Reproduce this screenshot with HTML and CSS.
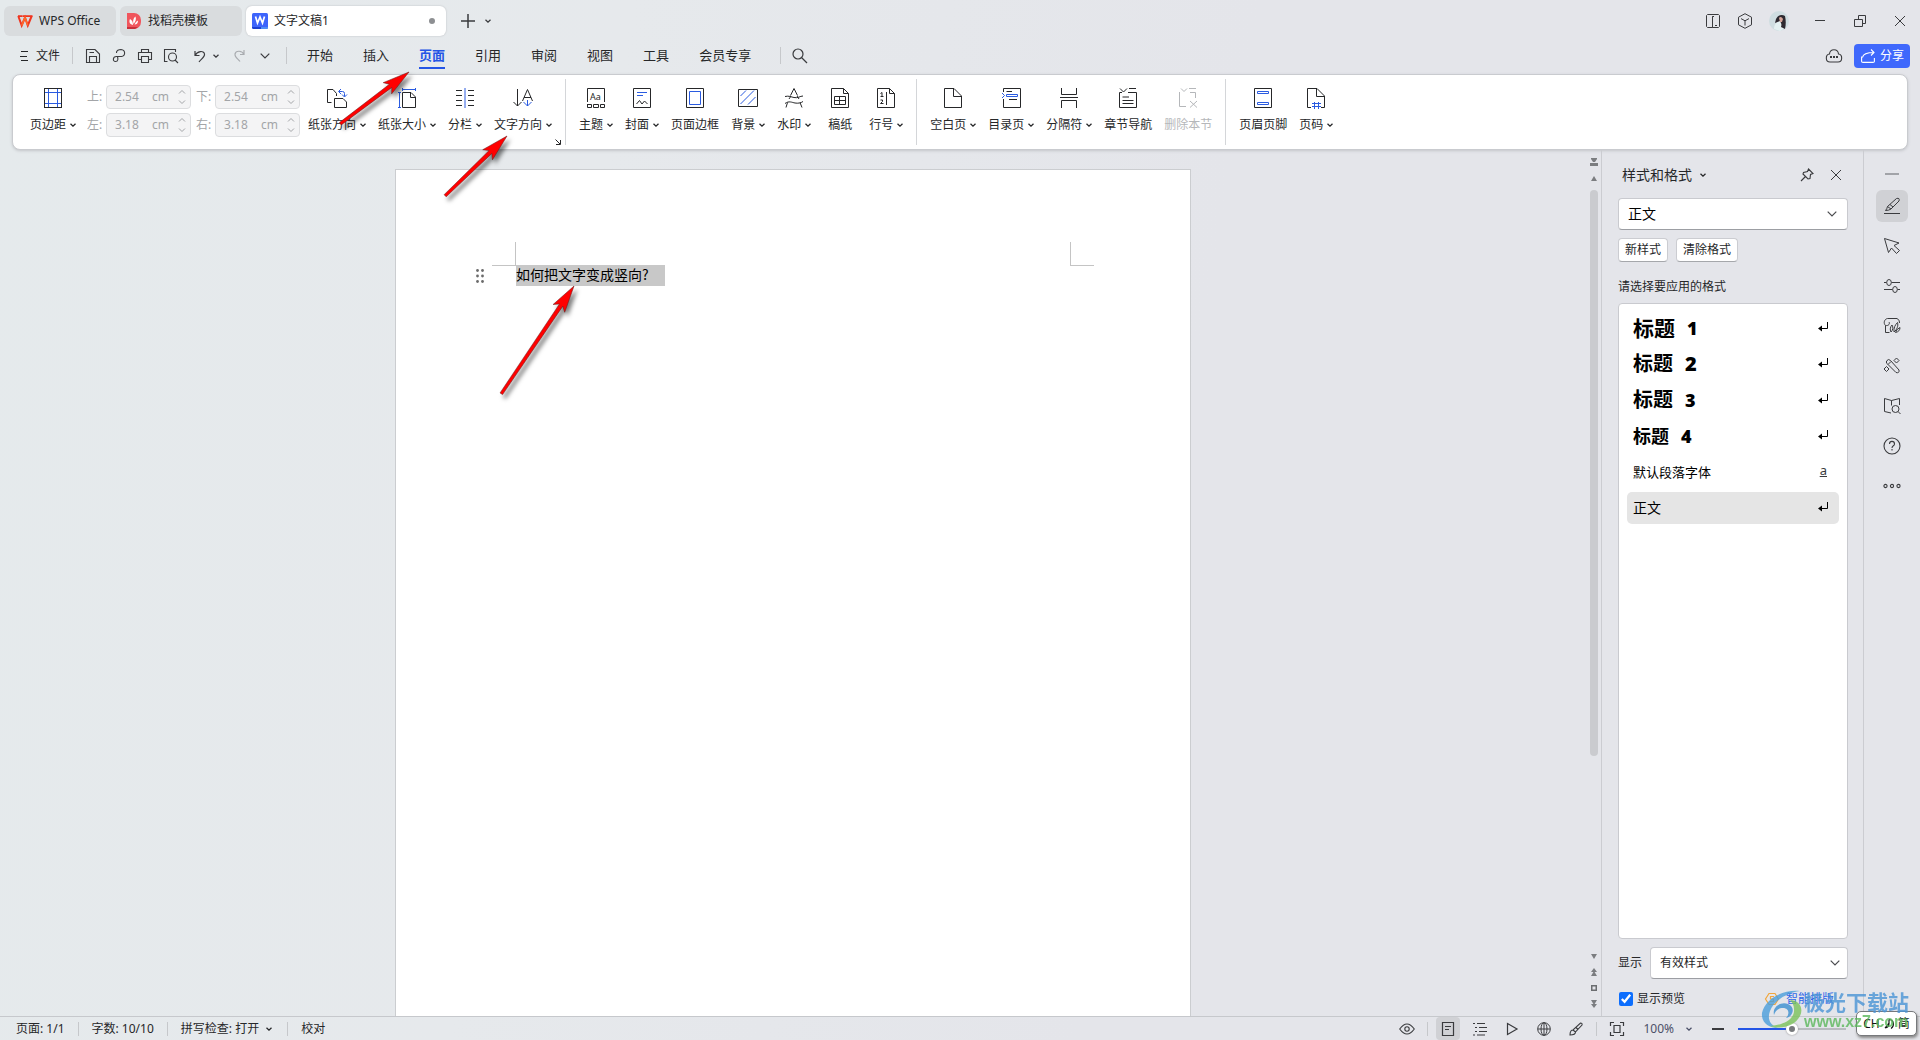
FILE: index.html
```html
<!DOCTYPE html>
<html lang="zh-CN">
<head>
<meta charset="utf-8">
<title>文字文稿1 - WPS Office</title>
<link rel="stylesheet" href="styles.css">
</head>
<body>
<svg class="defs" aria-hidden="true">
  <symbol id="chev" viewBox="0 0 6 4"><path d="M.5 .7 3 3.1 5.5 .7" fill="none" stroke="currentColor" stroke-width="1.3"/></symbol>
  <symbol id="chev-l" viewBox="0 0 10 6"><path d="M.7 .7 5 5 9.300 .7" fill="none" stroke="currentColor" stroke-width="1.2"/></symbol>
  <symbol id="spin" viewBox="0 0 8 16"><path d="M1 4.500 4 1.500 7 4.500M1 11.500 4 14.500 7 11.500" fill="none" stroke="currentColor"/></symbol>
  <symbol id="enter" viewBox="0 0 12 12"><path d="M10.500 0V6.500H2" fill="none" stroke="currentColor"/><path d="M1 6.500 5 3.500V9.500Z" fill="currentColor"/></symbol>
  <symbol id="close" viewBox="0 0 12 12"><path d="M1 1 11 11M11 1 1 11" fill="none" stroke="currentColor"/></symbol>
</svg>

<header class="titlebar">
  <nav class="doctabs" aria-label="文档标签">
    <button class="doctab home"><svg class="logo-wps" viewBox="0 0 16 12"><path d="M1 1.200H5.200M5.500 1.200H15.500" stroke="#f0341f" stroke-width="1.800"/><path d="M1.300 1 4.700 10.500 8 2.500 10.800 10.500 14.700 1" fill="none" stroke="#f0341f" stroke-width="2"/><path d="M4.700 10.500 8 2.500 10.800 10.500" fill="none" stroke="#ff6a2b" stroke-width="1.600"/></svg><span>WPS Office</span></button>
    <button class="doctab tpl"><svg class="i16" viewBox="0 0 16 16"><path d="M1 0H8A7 7 0 0 1 15 7V9A7 7 0 0 1 8 16H1Z" fill="#f0555c"/><path d="M1 14H12L9 16H1Z" fill="#c9303b"/><path d="M7 12C3 11 3 8 4 6 6 7 7 9 7 12ZM7.500 11C6.500 7 8 4.500 9.500 3.500 10.500 6 9.500 9 7.500 11ZM8.500 11.500C9.500 9 11 8 12 7.500 12 10 11 11.500 8.500 11.500Z" fill="#fff"/></svg><span>找稻壳模板</span></button>
    <button class="doctab active"><svg class="i16" viewBox="0 0 16 16"><rect width="16" height="16" rx="1.500" fill="#3d64fb"/><path d="M0 14H9V16H1.500L0 15Z" fill="#1b3fd0"/><path d="M9 14H16V15L15 16H9Z" fill="#4f8df5"/><path d="M3.500 3.500 5.500 10 8 4 10.500 10 12.500 3.500" fill="none" stroke="#fff" stroke-width="1.700"/></svg><span>文字文稿1</span><i class="dot"></i></button>
    <button class="icon newtab" aria-label="新建"><svg class="i14" viewBox="0 0 14 14"><path d="M7 0V14M0 7H14" stroke="currentColor" stroke-width="1.500"/></svg></button>
    <button class="icon" aria-label="标签列表"><svg class="chev" viewBox="0 0 6 4"><use href="#chev"/></svg></button>
  </nav>
  <div class="winctl">
    <button class="icon" aria-label="侧栏"><svg class="i16" viewBox="0 0 16 16"><path d="M7.500 14.500H2.500L1.500 13.500V2.500L2.500 1.500H13.500L14.500 2.500V13.500L13.500 14.500H7.500V3.500H9M7.500 3.500V14.500M10 12.500H12" fill="none" stroke="currentColor"/></svg></button>
    <button class="icon" aria-label="应用"><svg class="i16" viewBox="0 0 16 16"><path d="M8 .7 14.500 4.200V11.800L8 15.300 1.500 11.800V4.200ZM4 5.600 8 7.800 12 5.600M8 7.800V12.500" fill="none" stroke="currentColor"/></svg></button>
    <button class="icon" aria-label="账户"><svg class="i20" viewBox="0 0 20 20"><circle cx="10" cy="10" r="10" fill="#cfdde1"/><path d="M5 18C5 13 9 10 12 10L16 17 11 20Z" fill="#e4f1f2"/><path d="M7 8C9 4 13 3 16 5 17 9 17 14 16 18L12 16C13 13 12 12 11 10L6 12Z" fill="#2e2930"/><path d="M10 7C11 5 13 6 14 8L13 11 11 11Z" fill="#d5a69b"/></svg></button>
    <button class="icon win min" aria-label="最小化"><svg class="i12" viewBox="0 0 12 12"><path d="M1 5.500H11" stroke="currentColor"/></svg></button>
    <button class="icon win" aria-label="还原"><svg class="i12" viewBox="0 0 12 12"><path d="M.5 4.500H8.500V11.500H.5ZM4.500 4.500V.5H11.500V8.500H8.500" fill="none" stroke="currentColor"/></svg></button>
    <button class="icon win" aria-label="关闭"><svg class="i12" viewBox="0 0 12 12"><use href="#close"/></svg></button>
  </div>
</header>

<div class="menubar">
  <button class="file"><svg class="i10" viewBox="0 0 10 10"><path d="M2 .5H9M1 5.500H8M2 9.500H9" stroke="currentColor"/></svg><span>文件</span></button>
  <i class="vsep"></i>
  <div class="quick">
    <button class="icon" aria-label="保存"><svg class="i16" viewBox="0 0 16 16"><path d="M1.500 1.500H10L14.500 6V14.500H1.500ZM4.500 14V8.500H11.500V14M4.500 4.500H9" fill="none" stroke="currentColor" stroke-width="1.100"/></svg></button>
    <button class="icon" aria-label="输出为PDF"><svg class="i16" viewBox="0 0 16 16"><path d="M5.500 5C5 2.500 8 1.500 10 1.500 15 2 14.500 8 10.500 8.500H5.500C1.500 8.500 1.500 13.500 4.500 13.500 7.500 13.500 7 10.500 6.500 8.500" fill="none" stroke="currentColor" stroke-width="1.100"/></svg></button>
    <button class="icon" aria-label="打印"><svg class="i16" viewBox="0 0 16 16"><path d="M4.500 4.500V1.500H11.500V4.500M4.500 11.500H1.500V4.500H14.500V11.500H11.500M4.500 8.500H11.500V14.500H4.500Z" fill="none" stroke="currentColor" stroke-width="1.100"/></svg></button>
    <button class="icon" aria-label="打印预览"><svg class="i16" viewBox="0 0 16 16"><path d="M4.500 13.500H1.500V1.500H12.500V4M12 12 15 15" fill="none" stroke="currentColor" stroke-width="1.100"/><circle cx="9.500" cy="9" r="4" fill="none" stroke="currentColor" stroke-width="1.100"/></svg></button>
    <button class="icon undo" aria-label="撤销"><svg class="i14" viewBox="0 0 14 14"><path d="M2 2V6.500H6.500M2 6.500C4 2 11 1 11.500 5 12 8 8 10 6 13" fill="none" stroke="currentColor" stroke-width="1.200"/></svg><svg class="chev" viewBox="0 0 6 4"><use href="#chev"/></svg></button>
    <button class="icon muted" aria-label="恢复"><svg class="i14" viewBox="0 0 14 14"><path d="M11 1V5.500H7M11 5.500C9 1.500 3 1 2 5 1.500 8 5 10 7 12.500" fill="none" stroke="currentColor" stroke-width="1.200"/></svg></button>
    <button class="icon" aria-label="自定义快速访问"><svg class="chev-l" viewBox="0 0 10 6"><use href="#chev-l"/></svg></button>
  </div>
  <i class="vsep"></i>
  <nav class="menus">
    <button>开始</button><button>插入</button><button class="current">页面</button><button>引用</button><button>审阅</button><button>视图</button><button>工具</button><button>会员专享</button>
  </nav>
  <i class="vsep"></i>
  <button class="icon search" aria-label="搜索"><svg class="i16" viewBox="0 0 16 16"><circle cx="6" cy="6" r="5" fill="none" stroke="currentColor" stroke-width="1.200"/><path d="M9.500 9.500 15 15" stroke="currentColor" stroke-width="1.200"/></svg></button>
  <div class="menuright">
    <button class="icon" aria-label="云同步"><svg class="i16" viewBox="0 0 16 16"><path d="M4 14C-.8 14-.8 6.500 3.500 6 4 .3 12 .3 12.500 6 16.800 6.500 16.800 14 12 14Z" fill="none" stroke="currentColor" stroke-width="1.100"/><path d="M4 8H6V10H4ZM7 8H9V10H7ZM10 8H12V10H10Z" fill="currentColor"/></svg></button>
    <button class="share"><svg class="i14" viewBox="0 0 14 14"><path d="M.6 7.500V12.500Q.6 13.400 2 13.400H12Q13.400 13.400 13.400 12.500V9M1.500 8.500C2 5 6 3.500 13 3.500M10 .5 13 3.500 10 6.500" fill="none" stroke="currentColor" stroke-width="1.100"/></svg><span>分享</span></button>
  </div>
</div>

<section class="ribbon" aria-label="页面">
  <button class="tool"><svg class="i20" viewBox="0 0 20 20"><rect x="1.500" y=".5" width="17" height="19" fill="none" stroke="currentColor"/><path d="M5.500 1V19M14.500 1V19M2 4.500H18M2 15.500H18" fill="none" stroke="#2a5be0"/></svg><span class="cap">页边距<svg class="chev" viewBox="0 0 6 4"><use href="#chev"/></svg></span></button>
  <div class="margins">
    <label for="m1">上:</label><div class="num"><input id="m1" value="2.54" disabled><span>cm</span><svg class="spin" viewBox="0 0 8 16"><use href="#spin"/></svg></div>
    <label for="m2">下:</label><div class="num"><input id="m2" value="2.54" disabled><span>cm</span><svg class="spin" viewBox="0 0 8 16"><use href="#spin"/></svg></div>
    <label for="m3">左:</label><div class="num"><input id="m3" value="3.18" disabled><span>cm</span><svg class="spin" viewBox="0 0 8 16"><use href="#spin"/></svg></div>
    <label for="m4">右:</label><div class="num"><input id="m4" value="3.18" disabled><span>cm</span><svg class="spin" viewBox="0 0 8 16"><use href="#spin"/></svg></div>
  </div>
  <button class="tool"><svg class="i20" viewBox="0 0 20 20"><path d="M4.500 14.500H.5V1.500H6L9.500 5.500V8M7.500 10.500H16L19.500 14V19.500H7.500Z" fill="none" stroke="currentColor"/><path d="M12 3.500H15.500Q17.500 3.500 17.500 5.500V8.500M14 1 11.500 3.500 14 6M15 6.500 17.500 9 20 6.500" fill="none" stroke="#2a5be0"/></svg><span class="cap">纸张方向<svg class="chev" viewBox="0 0 6 4"><use href="#chev"/></svg></span></button>
  <button class="tool"><svg class="i20" viewBox="0 0 20 20"><path d="M5.500 4.500H14L18.500 9V19.500H5.500ZM13.500 4.500V9.500H18.500" fill="none" stroke="currentColor"/><path d="M5 1.500H18M5.500 0V3M18.500 0V3M2.500 5V19M1 4.500H4M1 19.500H4" fill="none" stroke="#2a5be0"/></svg><span class="cap">纸张大小<svg class="chev" viewBox="0 0 6 4"><use href="#chev"/></svg></span></button>
  <button class="tool"><svg class="i20" viewBox="0 0 20 20"><path d="M1 2.500H7M1 7.500H7M1 12.500H7M1 17.500H7M13 2.500H19M13 7.500H19M13 12.500H19M13 17.500H19" stroke="currentColor"/><path d="M10 0V20" stroke="#2a5be0"/></svg><span class="cap">分栏<svg class="chev" viewBox="0 0 6 4"><use href="#chev"/></svg></span></button>
  <button class="tool"><svg class="i20" viewBox="0 0 20 20"><path d="M4.500 1V18M.5 14 4.500 18 8.500 14M9.500 13 14.500 1.500 19.500 13M11 9.500H18" fill="none" stroke="currentColor"/><path d="M14.500 12V18M10.500 14 14.500 18 18.500 14" fill="none" stroke="#2a5be0"/></svg><span class="cap">文字方向<svg class="chev" viewBox="0 0 6 4"><use href="#chev"/></svg></span></button>
  <div class="rsep launch"><svg class="launcher" viewBox="0 0 6 6"><path d="M.5 .5 5 5M5.500 1V5.500H1" fill="none" stroke="currentColor"/></svg></div>
  <button class="tool"><svg class="i20" viewBox="0 0 20 20"><path d="M1.500 14V.5H18.500V14M1 16.500H5.500V19.500H1.500V16.500M7.500 16.500H12.500V19.500H7.500ZM14.500 16.500H18.500V19.500H14.500Z" fill="none" stroke="currentColor"/><text x="4" y="12" class="glyph">Aa</text></svg><span class="cap">主题<svg class="chev" viewBox="0 0 6 4"><use href="#chev"/></svg></span></button>
  <button class="tool"><svg class="i20" viewBox="0 0 20 20"><path d="M1.500 .5H18.500V19.500H1.500ZM4.500 16 7.500 12.500 10 16 12.500 13 15.500 16" fill="none" stroke="currentColor"/><path d="M5 4.500H15M5 7.500H11" stroke="#2a5be0"/></svg><span class="cap">封面<svg class="chev" viewBox="0 0 6 4"><use href="#chev"/></svg></span></button>
  <button class="tool"><svg class="i20" viewBox="0 0 20 20"><path d="M1.500 .5H18.500V19.500H1.500Z" fill="none" stroke="currentColor"/><path d="M4.500 3.500H15.500V16.500H4.500Z" fill="none" stroke="#2a5be0"/></svg><span class="cap">页面边框</span></button>
  <button class="tool"><svg class="i20" viewBox="0 0 20 20"><path d="M.5 1.500H19.500V18.500H.5Z" fill="none" stroke="currentColor"/><path d="M2.500 8 8 2.500M2.500 16 16 2.500M10 16.500 17.500 9" fill="none" stroke="#2a5be0"/></svg><span class="cap">背景<svg class="chev" viewBox="0 0 6 4"><use href="#chev"/></svg></span></button>
  <button class="tool"><svg class="i20" viewBox="0 0 20 20"><path d="M6.500 7.500 10 .5 13.500 7.500M5 11 7 8M15 11 13 8M3.500 14.500 2 19.500M16 14.500 18 19.500M1 8.500C5 7.500 7 9 10 9.500 14 10.500 16 8 19 8M1 15.500C5 12.500 8 14.500 11 15 14 15.500 17 15 19 13.500" fill="none" stroke="currentColor"/></svg><span class="cap">水印<svg class="chev" viewBox="0 0 6 4"><use href="#chev"/></svg></span></button>
  <button class="tool"><svg class="i20" viewBox="0 0 20 20"><path d="M1.500 .5H13.500L18.500 5.500V19.500H1.500ZM13.500 .5V5.500H18.500M4.500 8.500H15.500V16.500H4.500ZM4.500 12.500H15.500M9.500 8.500V16.500" fill="none" stroke="currentColor"/></svg><span class="cap">稿纸</span></button>
  <button class="tool"><svg class="i20" viewBox="0 0 20 20"><path d="M9 .5H1.500V19.500H18.500V5.500L13.500 .5H9M13.500 .5V5.500H18.500M10.500 4V17M4.500 5.500 6 4.500V8.500M4.500 8.500H7.500M4.500 12H6.500V13.500L4.500 15.500H7.500" fill="none" stroke="currentColor"/></svg><span class="cap">行号<svg class="chev" viewBox="0 0 6 4"><use href="#chev"/></svg></span></button>
  <div class="rsep"></div>
  <button class="tool"><svg class="i20" viewBox="0 0 20 20"><path d="M1.500 .5H11L18.500 8V19.500H1.500ZM10.500 .5V8.500H18.500" fill="none" stroke="currentColor"/></svg><span class="cap">空白页<svg class="chev" viewBox="0 0 6 4"><use href="#chev"/></svg></span></button>
  <button class="tool"><svg class="i20" viewBox="0 0 20 20"><path d="M2.500 4V.5H19.500V19.500H2.500V11M5.500 3.500H11M8 11.500H16" fill="none" stroke="currentColor"/><path d="M5.500 6.500H16.500V8.500H5.500ZM1 5 3.500 7.500 1 10" fill="none" stroke="#2a5be0"/></svg><span class="cap">目录页<svg class="chev" viewBox="0 0 6 4"><use href="#chev"/></svg></span></button>
  <button class="tool"><svg class="i20" viewBox="0 0 20 20"><path d="M2.500 0V6.500H17.500V0M1 9.500H19M2.500 20V12.500H17.500V20" fill="none" stroke="currentColor"/></svg><span class="cap">分隔符<svg class="chev" viewBox="0 0 6 4"><use href="#chev"/></svg></span></button>
  <button class="tool"><svg class="i20" viewBox="0 0 20 20"><path d="M10 4.500H18.500V19.500H1.500V4.500H4M2 .5 5.500 4 9 .5M11 .5H18M4.500 9H11M4.500 12.500H15.500M4.500 15.500H15.500" fill="none" stroke="currentColor"/></svg><span class="cap">章节导航</span></button>
  <button class="tool" disabled><svg class="i20" viewBox="0 0 20 20"><path d="M3 .5 6 3.500 9 .5M11 .5H18M1.500 4V18.500H8M12 4.500H17.500V10M12 13 19 19.500M19 13 12 19.500" fill="none" stroke="currentColor"/></svg><span class="cap">删除本节</span></button>
  <div class="rsep"></div>
  <button class="tool"><svg class="i20" viewBox="0 0 20 20"><path d="M1.500 .5H18.500V19.500H1.500Z" fill="none" stroke="currentColor"/><path d="M4.500 3.500H15.500V5.500H4.500ZM4.500 14.500H15.500V16.500H4.500Z" fill="none" stroke="#2a5be0"/></svg><span class="cap">页眉页脚</span></button>
  <button class="tool"><svg class="i20" viewBox="0 0 20 20"><path d="M5 19.500H1.500V.5H11L18.500 8V19.500H15M10.500 .5V8.500H18.500" fill="none" stroke="currentColor"/><path d="M8.500 14V21M12.500 14V21M6 15.500H15M6 18.500H15" stroke="#2a5be0"/></svg><span class="cap">页码<svg class="chev" viewBox="0 0 6 4"><use href="#chev"/></svg></span></button>
</section>

<main class="workspace">
  <div class="canvas">
    <article class="page">
      <div class="cropmarks"><i class="crop left"></i><i class="crop right"></i></div>
      <div class="para">
        <svg class="grip" viewBox="0 0 8 14"><g fill="#6b6b6b"><circle cx="1.500" cy="1.500" r="1.400"/><circle cx="6.500" cy="1.500" r="1.400"/><circle cx="1.500" cy="7" r="1.400"/><circle cx="6.500" cy="7" r="1.400"/><circle cx="1.500" cy="12.500" r="1.400"/><circle cx="6.500" cy="12.500" r="1.400"/></g></svg>
        <p>如何把文字变成竖向?</p>
      </div>
    </article>
  </div>
  <div class="scroll">
    <svg class="s8" viewBox="0 0 8 8"><path d="M1 0H7V1L5 4H3L1 1ZM0 5H8V8H0Z" fill="#7b7d80"/></svg>
    <svg class="s8 up" viewBox="0 0 8 8"><path d="M4 2 7 7H1Z" fill="#7b7d80"/></svg>
    <div class="track"><i class="thumb"></i></div>
    <svg class="s8" viewBox="0 0 8 8"><path d="M1 2H7L4 7Z" fill="#7b7d80"/></svg>
    <svg class="s8" viewBox="0 0 8 8"><path d="M4 0 7 4H1ZM4 3 7 8H1Z" fill="#7b7d80"/></svg>
    <svg class="s8" viewBox="0 0 8 8"><rect x="1.750" y="1.750" width="4.500" height="4.500" fill="none" stroke="#6b6d70" stroke-width="1.500"/></svg>
    <svg class="s8" viewBox="0 0 8 8"><path d="M4 8 7 4H1ZM4 5 7 0H1Z" fill="#7b7d80"/></svg>
  </div>

  <aside class="panel">
    <div class="phead"><h2>样式和格式</h2><svg class="chev" viewBox="0 0 6 4"><use href="#chev"/></svg>
      <button class="icon pin" aria-label="固定"><svg class="i14" viewBox="0 0 14 14"><path d="M8.500 1 13 5.500 10.500 6.500 10 10.500 8 11 3 6 3.500 4.500 7.500 3.500ZM5.500 8.500 1 13" fill="none" stroke="currentColor" stroke-width="1.100"/></svg></button>
      <button class="icon" aria-label="关闭窗格"><svg class="i12" viewBox="0 0 12 12"><use href="#close"/></svg></button></div>
    <div class="sel big"><select aria-label="当前样式"><option>正文</option></select><svg class="chev-l" viewBox="0 0 10 6"><use href="#chev-l"/></svg></div>
    <div class="pbtns"><button>新样式</button><button>清除格式</button></div>
    <p class="hint">请选择要应用的格式</p>
    <ul class="styles">
      <li class="h1"><span>标题</span><b>1</b><svg class="i12" viewBox="0 0 12 12"><use href="#enter"/></svg></li>
      <li class="h2"><span>标题</span><b>2</b><svg class="i12" viewBox="0 0 12 12"><use href="#enter"/></svg></li>
      <li class="h3"><span>标题</span><b>3</b><svg class="i12" viewBox="0 0 12 12"><use href="#enter"/></svg></li>
      <li class="h4"><span>标题</span><b>4</b><svg class="i12" viewBox="0 0 12 12"><use href="#enter"/></svg></li>
      <li class="def"><span>默认段落字体</span><u>a</u></li>
      <li class="on"><span>正文</span><svg class="i12" viewBox="0 0 12 12"><use href="#enter"/></svg></li>
    </ul>
    <div class="show"><label for="show">显示</label><div class="sel"><select id="show"><option>有效样式</option></select><svg class="chev-l" viewBox="0 0 10 6"><use href="#chev-l"/></svg></div></div>
    <div class="prev"><label><input type="checkbox" checked><span>显示预览</span></label>
      <a href="#smart"><svg class="i14" viewBox="0 0 14 14"><path d="M4 1.500H10L13.500 7 10 12.500H4L.5 7Z" fill="none" stroke="#f0a63c" stroke-width="1.200"/><path d="M9 4.500H5.500V7H8.500V9.500H5" fill="none" stroke="#f0a63c" stroke-width="1.200"/></svg><span>智能排版</span></a></div>
  </aside>

  <nav class="side" aria-label="工具侧栏">
    <button class="icon" aria-label="收起"><svg class="i16" viewBox="0 0 16 16"><path d="M1 8H15" stroke="#8b8d92" stroke-width="1.500"/></svg></button>
    <button class="icon on" aria-label="样式"><svg class="i18" viewBox="0 0 18 18"><path d="M1 16.500H17M2.500 13.500Q4 12 4.500 9.500L13.500 1.500Q17 .5 16 4L8 12Q6 13.500 2.500 13.500ZM4.500 9.500 8 12M7 7.500 10 10" fill="none" stroke="currentColor"/></svg></button>
    <button class="icon" aria-label="选择"><svg class="i18" viewBox="0 0 18 18"><path d="M1.500 1.500 16 6 11 8.500 16.500 13.500 13.500 16.500 8.500 11 5.500 15.500Z" fill="none" stroke="currentColor"/></svg></button>
    <button class="icon" aria-label="属性"><svg class="i18" viewBox="0 0 18 18"><path d="M1 5.500H3.500M8.500 5.500H17M1 12.500H9.500M14.500 12.500H17" stroke="currentColor"/><ellipse cx="6" cy="5.500" rx="2.300" ry="3" fill="none" stroke="currentColor"/><ellipse cx="12" cy="12.500" rx="2.300" ry="3" fill="none" stroke="currentColor"/></svg></button>
    <button class="icon" aria-label="素材"><svg class="i18" viewBox="0 0 18 18"><path d="M6.500 15.500H2.500V8.500C0 6 1.500 2 4.500 1.500H14Q17 3 16.500 6M2.500 8.500C6 9 7 6.500 6 5M8 15C6.500 12.500 7.500 9.500 9 8 10.500 10.500 10 13 8 15ZM11 15C10.500 11 12 8 14.500 5.500 15.500 9 14 12.500 11 15ZM12.500 15.500Q13.500 12 17 10.500 17 14.500 12.500 15.500Z" fill="none" stroke="currentColor"/></svg></button>
    <button class="icon" aria-label="智能工具"><svg class="i18" viewBox="0 0 18 18"><path d="M4 3.500Q5.500 1.500 7.500 3.500L16 13Q16.500 16.500 13 15.500L4 6.500Q2.500 5 4 3.500ZM5 7.500 8 4.500M13.500 1 16 3.500 13.500 6 11 3.500ZM3.500 9.500 6 12 3.500 14.500 1 12Z" fill="none" stroke="currentColor"/></svg></button>
    <button class="icon" aria-label="查找"><svg class="i18" viewBox="0 0 18 18"><path d="M8 16 1.500 14.500V1.500L8.500 3.500 16.500 1.500V8M8.500 3.500V8.500M15 14.500 17.500 17" fill="none" stroke="currentColor"/><circle cx="12.500" cy="12" r="3.500" fill="none" stroke="currentColor"/></svg></button>
    <button class="icon" aria-label="帮助"><svg class="i18" viewBox="0 0 18 18"><circle cx="9" cy="9" r="8" fill="none" stroke="currentColor" stroke-width="1.100"/><path d="M6.500 7C6.500 3.500 11.500 3.500 11.500 7 11.500 9 9 8.500 9 11M9 12V13.500" fill="none" stroke="currentColor" stroke-width="1.100"/></svg></button>
    <button class="icon" aria-label="更多"><svg class="i18" viewBox="0 0 18 18"><g fill="none" stroke="currentColor" stroke-width="1.100"><circle cx="2.500" cy="9" r="1.600"/><circle cx="9" cy="9" r="1.600"/><circle cx="15.500" cy="9" r="1.600"/></g></svg></button>
  </nav>
</main>

<footer class="status">
  <span>页面: 1/1</span><i class="vsep"></i><span>字数: 10/10</span><i class="vsep"></i><button class="spell">拼写检查: 打开<svg class="chev" viewBox="0 0 6 4"><use href="#chev"/></svg></button><i class="vsep"></i><span>校对</span>
  <div class="views">
    <button class="icon" aria-label="护眼模式"><svg class="i16" viewBox="0 0 16 16"><path d="M.7 8Q8-2 15.300 8 8 18 .7 8Z" fill="none" stroke="currentColor" stroke-width="1.100"/><circle cx="8" cy="8" r="2.200" fill="none" stroke="currentColor" stroke-width="1.100"/></svg></button>
    <i class="vsep"></i>
    <button class="icon on" aria-label="页面视图"><svg class="i14" viewBox="0 0 14 14"><path d="M1.500 .5H12.500V13.500H1.500ZM4 4.500H10M4 7.500H8" fill="none" stroke="currentColor" stroke-width="1.200"/></svg></button>
    <button class="icon" aria-label="大纲"><svg class="i14" viewBox="0 0 14 14"><path d="M0 1.500H2M4 1.500H12M2 5.500H4M6 5.500H14M2 9.500H4M6 9.500H14M0 13H2M4 13H12" stroke="currentColor" stroke-width="1.100"/></svg></button>
    <button class="icon" aria-label="阅读"><svg class="i14" viewBox="0 0 14 14"><path d="M2.500 1.500 12 7 2.500 12.500Z" fill="none" stroke="currentColor" stroke-width="1.200"/></svg></button>
    <button class="icon" aria-label="Web版式"><svg class="i14" viewBox="0 0 14 14"><g fill="none" stroke="currentColor"><circle cx="7" cy="7" r="6.300"/><ellipse cx="7" cy="7" rx="3" ry="6.300"/><path d="M1 7H13M7 1V13"/></g></svg></button>
    <button class="icon" aria-label="写作模式"><svg class="i14" viewBox="0 0 14 14"><path d="M1 13C1 9 2.500 8 4 8L11.500 1Q13.500 1 13 3L6.500 10C6.500 12 4 13 1 13ZM4 8 6.500 10M7 5.500 9 7.500" fill="none" stroke="currentColor" stroke-width="1.100"/></svg></button>
    <i class="vsep"></i>
    <button class="icon fit" aria-label="最佳显示"><svg class="i14" viewBox="0 0 14 14"><path d="M.5 4V.5H4M10 .5H13.500V4M13.500 10V13.500H10M4 13.500H.5V10M4 3.500H10V10.500H4Z" fill="none" stroke="currentColor" stroke-width="1.200"/></svg></button>
    <button class="zoomval">100%<svg class="chev" viewBox="0 0 6 4"><use href="#chev"/></svg></button>
    <button class="icon zminus" aria-label="缩小"><svg class="i12" viewBox="0 0 12 12"><path d="M0 6H12" stroke="currentColor" stroke-width="2"/></svg></button>
    <input type="range" min="0" max="100" value="50" aria-label="显示比例">
  </div>
</footer>

<svg class="arrows" viewBox="0 0 620 420" aria-hidden="true">
  <g fill="#ff0000" stroke="#6a1a1a" stroke-width=".5">
    <path transform="translate(409 72) rotate(-37)" d="M0 0-27-7-23-2-86-1.500V1.500L-23 2-27 7Z"/>
    <path transform="translate(507 136) rotate(-44)" d="M0 0-27-7-23-2-86-1.500V1.500L-23 2-27 7Z"/>
    <path transform="translate(574 286) rotate(-56)" d="M0 0-27-7-23-2-130-1.500V1.500L-23 2-27 7Z"/>
  </g>
</svg>

<div class="ime">CH<svg class="i10" viewBox="0 0 10 10"><path d="M5 .5V4.500Q5 8.500 1 9M5 .5C11 1 10 8 7 9.500M5 4 1 9" fill="none" stroke="currentColor" stroke-width="1.200"/></svg>简</div>
<div class="brand">
  <svg class="swirl" viewBox="0 0 42 40"><path d="M39 1C24-1 4 8 1 23 0 33 8 38 17 38 9 35 6 29 9 21 13 11 25 3 39 1Z" fill="#4b9fdc"/><path d="M13 25C11 17 20 11 27 14 35 17 32 27 25 28 29 24 28 18 22 18 17 18 14 21 13 25Z" fill="#3c8fd0"/><path d="M29 10C38 10 43 18 39 26 34 36 20 40 9 36 23 35 34 29 33 19 33 15 31 12 29 10Z" fill="#7cc35b"/></svg>
  <div class="btext"><strong>极光下载站</strong><em>www.xz7.com</em></div>
</div>
</body>
</html>
```
FILE: styles.css
```css
* { box-sizing: border-box; }
body {
  margin: 0; height: 100vh; display: flex; flex-direction: column; overflow: hidden; position: relative;
  font: 12px/16px "Noto Sans", "Noto Sans CJK SC", sans-serif; color: #262729;
  background: linear-gradient(100deg, #e5eaec 0%, #e6e9ec 30%, #e4e5ea 60%, #e4e5ea 100%);
}
button { border: 0; background: none; padding: 0; margin: 0; font: inherit; color: inherit; white-space: nowrap; }
svg { display: block; flex: none; overflow: visible; }
h2, p, ul { margin: 0; padding: 0; font-weight: 400; }
.defs { position: absolute; width: 0; height: 0; }
.i10 { width: 10px; height: 10px; }
.i12 { width: 12px; height: 12px; }
.i14 { width: 14px; height: 14px; }
.i16 { width: 16px; height: 16px; }
.i18 { width: 18px; height: 18px; }
.i20 { width: 20px; height: 20px; }
.chev { width: 6px; height: 4px; }
.chev-l { width: 10px; height: 6px; }
.icon { display: flex; align-items: center; justify-content: center; color: #3a3b3e; }
.muted { color: #a9acb0; }
.vsep { width: 1px; height: 17px; background: #c6c8cb; flex: none; }

.titlebar { display: flex; justify-content: space-between; height: 37px; padding: 6px 8px 1px 4px; }
.doctabs { display: flex; gap: 4px; }
.doctab { display: flex; align-items: center; height: 30px; border-radius: 6px; background: #d9dcde; gap: 6px; padding: 0 6px; }
.home { width: 112px; padding-left: 13px; }
.tpl { width: 122px; }
.logo-wps { width: 16px; height: 12px; }
.doctab.active { width: 200px; background: #fff; box-shadow: 0 0 2px #b8babd; }
.dot { width: 6px; height: 6px; border-radius: 50%; background: #8d8f92; margin: 0 5px 0 auto; }
.newtab { margin: 0 6px 0 11px; }
.winctl { display: flex; align-items: center; gap: 16px; }
.winctl .win { width: 24px; }
.winctl .min { margin-left: 3px; }

.menubar { display: flex; align-items: center; height: 37px; padding: 0 10px 0 19px; }
.file { display: flex; align-items: center; gap: 7px; margin-right: 12px; }
.quick { display: flex; align-items: center; gap: 10px; margin: 0 16px 0 12px; }
.undo { gap: 6px; margin: 0 4px 0 4px; }
.quick .muted { margin-right: 3px; }
.menus { display: flex; gap: 30px; margin: 0 29px 0 20px; font-size: 13px; }
.menus button { height: 27px; border-bottom: 2px solid transparent; }
.menus .current { color: #2455e6; font-weight: 700; border-color: #2455e6; }
.search { margin-left: 11px; }
.menuright { display: flex; gap: 12px; align-items: center; margin-left: auto; }
.share { display: flex; align-items: center; gap: 5px; width: 56px; height: 24px; padding-left: 7px; border-radius: 4px; background: #3f68fc; color: #fff; }

.ribbon {
  display: flex; gap: 12px; height: 76px; margin: 0 12px; padding: 0 17px; flex: none;
  background: #fff; border: 1px solid #c9cbcf; border-radius: 8px; box-shadow: 0 1px 3px #c3c5c9;
}
.tool { display: flex; flex-direction: column; align-items: center; gap: 9px; padding-top: 13px; min-width: 34px; }
.tool:disabled { color: #b5b7ba; }
.cap { display: flex; align-items: center; gap: 4px; line-height: 16px; }
.margins { display: grid; grid-template-columns: 14px 85px 14px 85px; gap: 4px 5px; padding-top: 10px; align-content: start; align-items: center; color: #a3a5a8; margin: 0 -4px 0 -1px; }
.margins label { white-space: nowrap; }
.num { display: flex; align-items: center; height: 24px; border: 1px solid #dcdddf; border-radius: 4px; background: #f4f4f5; padding: 0 4px 0 8px; }
.num input { width: 37px; border: 0; padding: 0; background: none; font: inherit; color: inherit; }
.num .spin { margin-left: auto; }
.spin { width: 8px; height: 16px; }
.rsep { width: 1px; height: 66px; margin: 4px 1px 0; background: #d4d6d9; }
.launch { position: relative; }
.launcher { position: absolute; right: 5px; bottom: 0; width: 6px; height: 6px; }
.glyph { font-family: "Noto Sans"; font-size: 9px; fill: currentColor; }

.workspace { flex: 1; display: flex; min-height: 0; }
.canvas { flex: 1; display: flex; justify-content: center; padding-top: 19px; }
.page { width: 796px; background: #fff; border: 1px solid #cbcdd0; border-bottom: 0; padding-top: 72px; }
.cropmarks { display: flex; justify-content: space-between; padding: 0 96px; }
.crop { width: 24px; height: 24px; border-bottom: 1px solid #c4c4c4; }
.crop.left { border-right: 1px solid #c4c4c4; }
.crop.right { border-left: 1px solid #c4c4c4; }
.para { display: flex; align-items: center; padding-left: 80px; gap: 32px; margin-top: -1px; }
.grip { width: 8px; height: 14px; }
.para p { width: 149px; height: 21px; background: #c8c8c8; font: 14px/19px "Noto Sans CJK SC", sans-serif; color: #000; }
.scroll { width: 15px; padding: 8px 0; display: flex; flex-direction: column; align-items: center; gap: 8px; }
.s8 { width: 8px; height: 8px; }
.track { flex: 1; width: 8px; }
.thumb { display: block; height: 75%; border-radius: 4px; background: #cacbcf; }

.panel { width: 262px; border-left: 1px solid #cbccd1; padding: 14px 15px 6px 16px; display: flex; flex-direction: column; }
.phead { display: flex; align-items: center; gap: 8px; padding: 0 6px 0 4px; height: 22px; }
.phead h2 { font-size: 14px; line-height: 20px; }
.pin { margin: 0 8px 0 auto; }
.sel { display: flex; align-items: center; height: 32px; background: #fff; border: 1px solid #c9cacf; border-bottom-color: #9c9ea3; border-radius: 4px; padding-right: 7px; flex: 1; }
.sel select { flex: 1; appearance: none; border: 0; background: none; padding: 0 9px; font: inherit; color: inherit; height: 28px; }
.sel .chev-l { color: #4a4b4e; }
.big { flex: none; margin-top: 12px; font-size: 14px; color: #000; padding-right: 10px; }
.pbtns { display: flex; gap: 8px; margin-top: 8px; }
.pbtns button { height: 24px; padding: 0 6px; background: #fff; border: 1px solid #cbccd1; border-bottom-color: #a5a7ab; border-radius: 4px; line-height: 20px; }
.hint { margin: 17px 0 8px; line-height: 16px; }
.styles { flex: 1; list-style: none; background: #fff; border: 1px solid #c9cacf; border-radius: 4px; padding: 8px 8px; display: flex; flex-direction: column; gap: 4px; color: #000; }
.styles li { display: flex; align-items: center; height: 32px; border-radius: 5px; padding: 0 10px 0 6px; font-size: 14px; }
.styles li svg, .styles li u { margin-left: auto; }
.styles li u { font-size: 13px; line-height: 20px; padding: 0 2px 4px 0; color: #3a3b3e; }
.styles .h1, .styles .h2, .styles .h3, .styles .h4 { font-weight: 700; }
.styles b { margin-left: 12px; }
.styles .h1 { font-size: 21px; }
.styles .h2, .styles .h3 { font-size: 20px; }
.styles .h1 b, .styles .h3 b { font-size: 18px; }
.styles .h4 { font-size: 18px; }
.styles .def { font-size: 13px; }
.styles .on { background: #e5e5e5; }
.show { display: flex; align-items: center; gap: 8px; margin-top: 8px; }
.prev { display: flex; justify-content: space-between; height: 22px; margin: 9px 14px 0 0; align-items: center; }
.prev label, .prev a { display: flex; align-items: center; gap: 4px; }
.prev a { color: #2e67e8; text-decoration: none; gap: 7px; }
.prev input { width: 14px; height: 14px; margin: 0 0 0 1px; accent-color: #0d6efd; }

.side { width: 57px; border-left: 1px solid #cbccd1; padding-top: 8px; display: flex; flex-direction: column; align-items: center; gap: 8px; }
.side .icon { width: 32px; height: 32px; border-radius: 6px; }
.side .icon:first-child { height: 24px; padding-top: 8px; }
.side .on, .views .on { background: #d0d1d5; }

.status { display: flex; align-items: center; height: 24px; flex: none; border-top: 1px solid #c6c8cc; padding-left: 16px; gap: 13px; }
.status .vsep { height: 14px; }
.spell, .zoomval { display: flex; align-items: center; gap: 7px; }
.spell { padding-right: 2px; }
.views { display: flex; align-items: center; margin-left: auto; gap: 8px; padding-right: 74px; height: 23px; }
.views .icon { width: 24px; height: 23px; border-radius: 4px; }
.zoomval { gap: 12px; color: #4b5068; margin: 0 6px; }
.views input { width: 108px; height: 12px; margin: 0; appearance: none; background: linear-gradient(90deg, #2455e6 50%, #b9bbc0 50%) center / 100% 2px no-repeat; }
.views input::-webkit-slider-thumb { appearance: none; width: 12px; height: 12px; border-radius: 50%; background: #77797c; border: 3px solid #fff; box-shadow: 0 0 2px #888; }

.arrows { position: absolute; left: 0; top: 0; width: 620px; height: 420px; pointer-events: none; filter: drop-shadow(3px 4px 2px rgba(0, 0, 0, .5)); }
.brand { position: absolute; right: 11px; bottom: 10px; display: flex; gap: 1px; opacity: .8; pointer-events: none; }
.swirl { width: 42px; height: 40px; }
.btext { display: flex; flex-direction: column; color: #4a94d6; }
.btext strong { font-size: 21px; line-height: 24px; font-weight: 700; }
.btext em { font: 700 16px/16px "Liberation Sans", sans-serif; color: #5cb85c; }
.ime { position: absolute; right: 3px; bottom: 4px; display: flex; align-items: center; justify-content: center; gap: 4px; width: 61px; height: 25px; background: #fff; border: 1px solid #77797c; border-radius: 5px; box-shadow: 1px 2px 3px #888; color: #111; }
```
